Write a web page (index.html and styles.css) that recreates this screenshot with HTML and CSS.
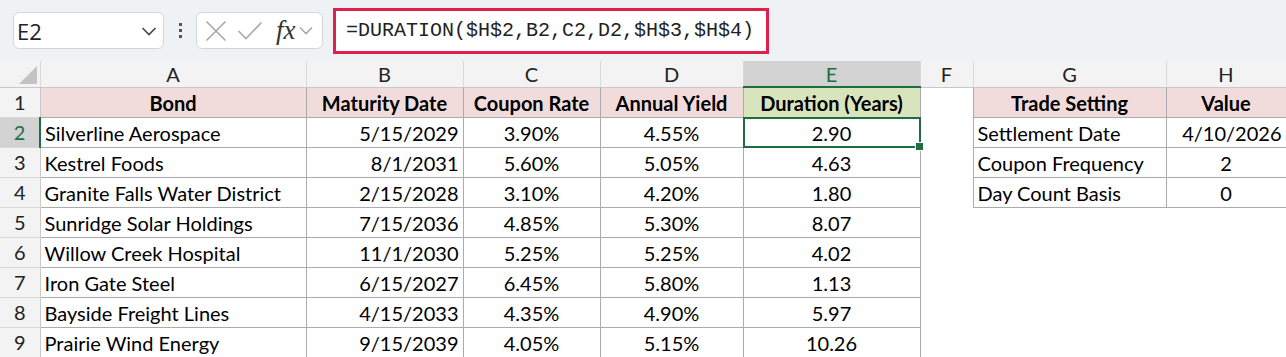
FILE: index.html
```html
<!DOCTYPE html>
<html lang="en">
<head>
    <meta charset="UTF-8">
    <title>DURATION</title>
    <link rel="stylesheet" href="styles.css">
</head>
<body>

    <div class="formula-bar">
        <div class="name-box">
            <span>E2</span>
            <svg class="chev" width="16" height="10" viewBox="0 0 16 10"><path d="M1.5 2 L8 8.5 L14.5 2" fill="none" stroke="#444" stroke-width="1.6"/></svg>
        </div>
        <div class="dots"><i></i><i></i><i></i></div>
        <div class="fx-box">
            <svg width="22" height="22" viewBox="0 0 22 22"><path d="M1.5 1.5 L20.5 20.5 M20.5 1.5 L1.5 20.5" stroke="#a8a8a8" stroke-width="1.6" fill="none"/></svg>
            <svg width="26" height="20" viewBox="0 0 26 20"><path d="M1.5 10 L9 17.5 L24.5 1.5" stroke="#a8a8a8" stroke-width="1.6" fill="none"/></svg>
            <span class="fx">fx</span>
            <svg width="14" height="9" viewBox="0 0 14 9"><path d="M1 1.5 L7 7.5 L13 1.5" fill="none" stroke="#a8a8a8" stroke-width="1.6"/></svg>
        </div>
        <div class="formula-input">=DURATION($H$2,B2,C2,D2,$H$3,$H$4)</div>
    </div>

    <table class="sheet">
        <colgroup>
            <col class="c-rh"><col class="c-a"><col class="c-b"><col class="c-c"><col class="c-d">
            <col class="c-e"><col class="c-f"><col class="c-g"><col class="c-h">
        </colgroup>
        <tr class="col-heads">
            <th class="corner"><span class="tri"></span></th>
            <th>A</th><th>B</th><th>C</th><th>D</th><th class="sel-col">E</th><th>F</th><th>G</th><th>H</th>
        </tr>
        <tr>
            <th class="rh">1</th>
            <td class="hd">Bond</td>
            <td class="hd">Maturity Date</td>
            <td class="hd">Coupon Rate</td>
            <td class="hd">Annual Yield</td>
            <td class="hd green">Duration (Years)</td>
            <td class="empty"></td>
            <td class="hd">Trade Setting</td>
            <td class="hd">Value</td>
        </tr>
        <tr>
            <th class="rh sel-row">2</th>
            <td>Silverline Aerospace</td><td class="r">5/15/2029</td><td class="c">3.90%</td><td class="c">4.55%</td>
            <td class="c active"><span class="sel"><i class="handle"></i></span>2.90</td>
            <td class="empty"></td><td>Settlement Date</td><td class="r">4/10/2026</td>
        </tr>
        <tr>
            <th class="rh">3</th>
            <td>Kestrel Foods</td><td class="r">8/1/2031</td><td class="c">5.60%</td><td class="c">5.05%</td><td class="c">4.63</td>
            <td class="empty"></td><td>Coupon Frequency</td><td class="c">2</td>
        </tr>
        <tr>
            <th class="rh">4</th>
            <td>Granite Falls Water District</td><td class="r">2/15/2028</td><td class="c">3.10%</td><td class="c">4.20%</td><td class="c">1.80</td>
            <td class="empty"></td><td>Day Count Basis</td><td class="c">0</td>
        </tr>
        <tr>
            <th class="rh">5</th>
            <td>Sunridge Solar Holdings</td><td class="r">7/15/2036</td><td class="c">4.85%</td><td class="c">5.30%</td><td class="c">8.07</td>
            <td class="empty"></td><td class="empty"></td><td class="empty"></td>
        </tr>
        <tr>
            <th class="rh">6</th>
            <td>Willow Creek Hospital</td><td class="r">11/1/2030</td><td class="c">5.25%</td><td class="c">5.25%</td><td class="c">4.02</td>
            <td class="empty"></td><td class="empty"></td><td class="empty"></td>
        </tr>
        <tr>
            <th class="rh">7</th>
            <td>Iron Gate Steel</td><td class="r">6/15/2027</td><td class="c">6.45%</td><td class="c">5.80%</td><td class="c">1.13</td>
            <td class="empty"></td><td class="empty"></td><td class="empty"></td>
        </tr>
        <tr>
            <th class="rh">8</th>
            <td>Bayside Freight Lines</td><td class="r">4/15/2033</td><td class="c">4.35%</td><td class="c">4.90%</td><td class="c">5.97</td>
            <td class="empty"></td><td class="empty"></td><td class="empty"></td>
        </tr>
        <tr>
            <th class="rh">9</th>
            <td>Prairie Wind Energy</td><td class="r">9/15/2039</td><td class="c">4.05%</td><td class="c">5.15%</td><td class="c">10.26</td>
            <td class="empty"></td><td class="empty"></td><td class="empty"></td>
        </tr>
    </table>

</body>
</html>
```

FILE: styles.css
```css
body {
    margin: 0;
    width: 1286px;
    height: 357px;
    overflow: hidden;
    background: white;
    font-family: Lato, "Open Sans", sans-serif;
}
.formula-bar {
    height: 61px;
    background: #eff2f5;
    display: flex;
    align-items: center;
    padding-left: 13px;
    box-sizing: border-box;
}
.name-box {
    width: 151px;
    height: 37px;
    box-sizing: border-box;
    background: white;
    border: 1px solid #d4d6d9;
    border-radius: 6px;
    display: flex;
    align-items: center;
    justify-content: space-between;
    padding: 0 6px 0 3px;
    font-family: "Open Sans", sans-serif;
    font-size: 22px;
    color: #222;
}
.dots {
    width: 32px;
    display: flex;
    flex-direction: column;
    align-items: center;
    gap: 3px;
}
.dots i {
    width: 3px;
    height: 3px;
    background: #555;
}
.fx-box {
    width: 127px;
    height: 37px;
    box-sizing: border-box;
    background: white;
    border: 1px solid #d4d6d9;
    border-radius: 6px;
    display: flex;
    align-items: center;
    gap: 10px;
    padding-left: 8px;
}
.fx {
    font-family: "Liberation Serif", serif;
    font-style: italic;
    font-size: 27px;
    color: #333;
    margin-left: 3px;
    margin-right: -7px;
    line-height: 1;
}
.formula-input {
    margin-left: 10px;
    width: 436px;
    height: 46px;
    box-sizing: border-box;
    border: 3px solid #e0204c;
    background: white;
    display: flex;
    align-items: center;
    padding-left: 10px;
    font-family: "Liberation Mono", monospace;
    font-size: 20px;
    color: #222;
}
.sheet {
    border-collapse: collapse;
    table-layout: fixed;
    width: 1286px;
    font-size: 20px;
    color: #000;
}
.c-rh { width: 40px; }
.c-a { width: 266px; }
.c-b { width: 157px; }
.c-c { width: 137px; }
.c-d { width: 143px; }
.c-e { width: 177px; }
.c-f { width: 53px; }
.c-g { width: 193px; }
.c-h { width: 120px; }
.sheet tr { height: 30px; }
.sheet .col-heads { height: 26px; }
.col-heads th {
    background: #f3f3f3;
    font-weight: normal;
    color: #222;
    border-right: 1px solid #d9d9d9;
    border-bottom: 1px solid #c8c8c8;
    padding: 0;
    text-align: center;
}
.col-heads .sel-col {
    background: #d2d2d2;
    color: #1e6e42;
    border-bottom: 2px solid #1e6e42;
}
.corner {
    position: relative;
}
.tri {
    position: absolute;
    right: 3px;
    bottom: 3px;
    width: 0;
    height: 0;
    border-left: 18px solid transparent;
    border-bottom: 18px solid #c3c3c3;
}
.rh {
    background: #f3f3f3;
    font-weight: normal;
    color: #222;
    border-bottom: 1px solid #d9d9d9;
    border-right: 1px solid #c8c8c8;
    padding: 0;
    text-align: center;
}
.rh.sel-row {
    background: #d2d2d2;
    color: #1e6e42;
    border-right: 2px solid #1e6e42;
}
.sheet td {
    border: 1px solid #ababab;
    padding: 2px 4px 0;
    white-space: nowrap;
    overflow: hidden;
}
.sheet td.empty {
    border: none;
}
.sheet td.r { text-align: right; }
.sheet td.c { text-align: center; }
.sheet td.hd {
    background: #f2dcdb;
    font-weight: bold;
    text-align: center;
}
.sheet td.hd.green {
    background: #d8e4bc;
}
.sheet td.active {
    position: relative;
    overflow: visible;
}
.sel {
    position: absolute;
    left: -1px;
    top: -1px;
    right: -1px;
    bottom: -1px;
    border: 2px solid #1e6e42;
}
.handle {
    position: absolute;
    right: -5px;
    bottom: -5px;
    width: 7px;
    height: 7px;
    background: #1e6e42;
    border: 1px solid white;
}
```
